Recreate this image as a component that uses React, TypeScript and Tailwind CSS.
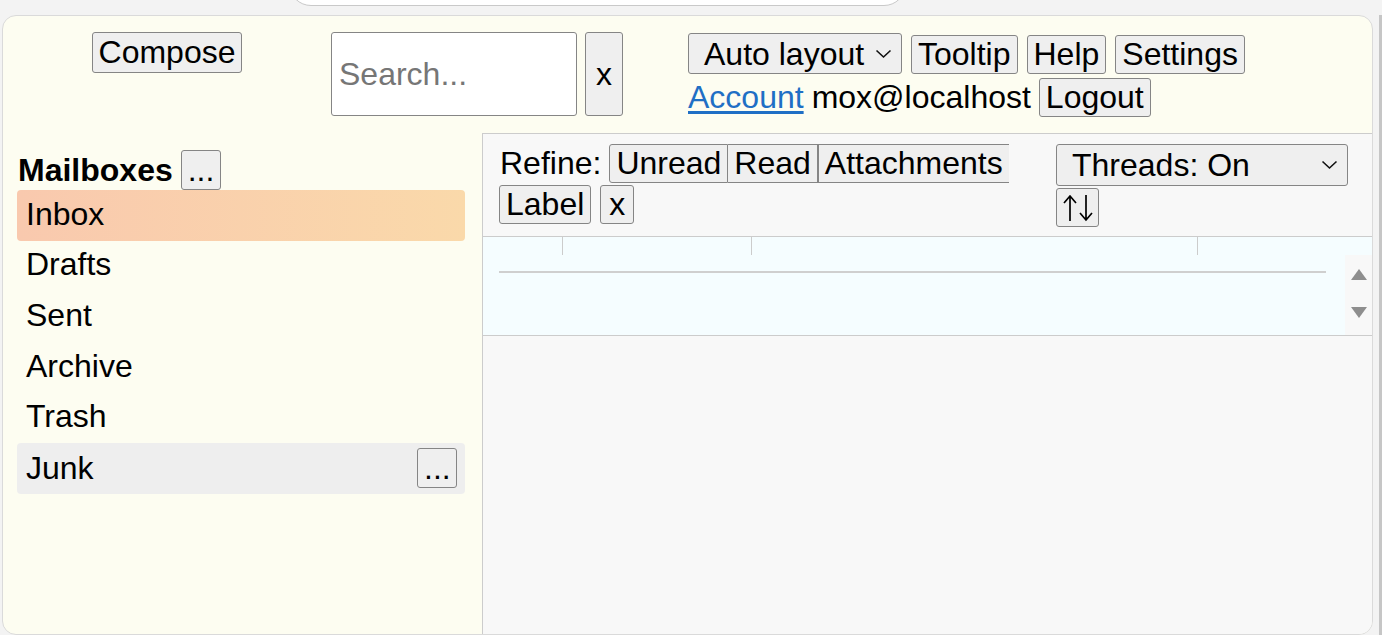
import React from 'react'

const btn = 'bg-[#efefef] border border-[#858585] rounded-[3px] px-[6px] leading-[37px] text-black'

function Chevron() {
  return (
    <svg width="17" height="10" viewBox="0 0 17 10" fill="none" stroke="#111" strokeWidth="1.6">
      <path d="M1.5 1.5 L8.5 8 L15.5 1.5" />
    </svg>
  )
}

function Select({ label, width }: { label: string; width: string }) {
  return (
    <div className={`${width} flex items-center justify-between bg-[#efefef] border border-[#858585] rounded-[3px] pl-[15px] pr-[9px]`}>
      <span className="leading-[36px]">{label}</span>
      <Chevron />
    </div>
  )
}

function SortArrows() {
  return (
    <svg width="32" height="30" viewBox="0 0 32 30" fill="none" stroke="#000" strokeWidth="1.7">
      <path d="M8 28 V3 M2 10 L8 3 L14 10" />
      <path d="M24 2 V27 M18 20 L24 27 L30 20" />
    </svg>
  )
}

const mailboxes = ['Inbox', 'Drafts', 'Sent', 'Archive', 'Trash', 'Junk']

export default function App() {
  return (
    <div className="w-[1382px] h-[635px] bg-[#f3f3f3] overflow-hidden flex flex-col font-['Liberation_Sans',Arial,sans-serif] text-[32px] leading-[1.15] text-black">
      {/* address bar edge */}
      <div className="h-[15px] shrink-0 overflow-hidden">
        <div className="ml-[289px] w-[617px] h-[30px] -mt-[24px] bg-white border border-[#c9c9c9] rounded-b-[22px]" />
      </div>

      <div className="flex flex-1">
        <div className="ml-[2px] w-[1371px] h-[620px] bg-[#fdfdf1] border border-[#dadada] rounded-[14px] overflow-hidden flex flex-col">
          {/* top bar */}
          <div className="h-[117px] shrink-0 flex items-start pt-[16px]">
            <div className="w-[328px] flex justify-center">
              <button className={`${btn} leading-[36px] py-px`}>Compose</button>
            </div>
            <div className="flex gap-[8px]">
              <input
                className="w-[246px] h-[84px] bg-white border border-[#858585] rounded-[3px] px-[7px] placeholder:text-[#767676] outline-none"
                placeholder="Search..."
              />
              <button className={`${btn} w-[38px] h-[84px] px-0`}>x</button>
            </div>
            <div className="ml-[65px] flex flex-col gap-[4px] pt-px">
              <div className="flex items-end gap-[9px]">
                <Select label="Auto layout" width="w-[214px] h-[41px]" />
                <button className={btn}>Tooltip</button>
                <button className={btn}>Help</button>
                <button className={`${btn} px-[5px]`}>Settings</button>
              </div>
              <div className="flex items-center gap-[8px]">
                <a href="#" className="text-[#1f6fc5] underline underline-offset-[3px]">Account</a>
                <span>mox@localhost</span>
                <button className={`${btn} leading-[36px]`}>Logout</button>
              </div>
            </div>
          </div>

          <div className="flex flex-1">
            {/* mailbox list */}
            <div className="w-[479px] shrink-0 pl-[14px] pr-[17px] pt-[17px]">
              <div className="flex items-center h-[40px]">
                <span className="font-bold ml-[1px]">Mailboxes</span>
                <button className={`${btn} ml-[8px] w-[40px] h-[40px] px-0 leading-[30px]`}>...</button>
              </div>
              {mailboxes.map((m) => (
                <div
                  key={m}
                  className={
                    m === 'Inbox'
                      ? 'h-[50.6px] flex items-center px-[9px] pb-[2px] rounded-[4px] bg-gradient-to-r from-[#f9c9ae] to-[#fad9aa]'
                      : m === 'Junk'
                        ? 'h-[50.6px] flex items-center justify-between pl-[9px] pr-[8px] rounded-[4px] bg-[#eeeeee]'
                        : 'h-[50.6px] flex items-center px-[9px] pb-[2px]'
                  }
                >
                  <span>{m}</span>
                  {m === 'Junk' && (
                    <button className={`${btn} w-[40px] h-[40px] px-0 leading-[30px]`}>...</button>
                  )}
                </div>
              ))}
            </div>

            {/* message pane */}
            <div className="flex-1 flex flex-col bg-[#f8f8f8] border-l border-t border-[#cccccc]">
              <div className="flex pt-[10px] pl-[16px] pb-[9px] border-b border-[#cccccc]">
                <div className="w-[557px] flex flex-col gap-[2px]">
                  <div className="flex items-center">
                    <span className="ml-px">Refine:</span>
                    <div className="ml-[8px] flex">
                      <button className={`${btn} rounded-r-none`}>Unread</button>
                      <button className={`${btn} px-[5px] rounded-none border-l-0`}>Read</button>
                      <button className={`${btn} px-[4px] rounded-none border-l border-r-0`}>Attachments</button>
                    </div>
                  </div>
                  <div className="flex items-center gap-[9px]">
                    <button className={btn}>Label</button>
                    <button className={`${btn} px-[8px]`}>x</button>
                  </div>
                </div>
                <div className="flex flex-col items-start gap-[2px]">
                  <Select label="Threads: On" width="w-[292px] h-[42px]" />
                  <button className="w-[43px] h-[39px] flex items-center justify-center bg-[#efefef] border border-[#858585] rounded-[3px]">
                    <SortArrows />
                  </button>
                </div>
              </div>

              {/* message list */}
              <div className="h-[99px] bg-[#f5fdff] border-b border-[#cccccc] flex flex-col">
                <div className="h-[18px] flex shrink-0">
                  <div className="w-[80px] border-r border-[#cccccc]" />
                  <div className="w-[189px] border-r border-[#cccccc]" />
                  <div className="w-[446px] border-r border-[#cccccc]" />
                </div>
                <div className="flex flex-1">
                  <div className="flex-1 pl-[16px] pt-[16px] pr-[19px]">
                    <div className="h-[2px] bg-[#cfcfcf]" />
                  </div>
                  <div className="w-[27px] bg-[#f8f8f8] flex flex-col items-center pt-[13px] gap-[25px]">
                    <svg width="18" height="13" viewBox="0 0 18 13"><path d="M9 1 L17 12 L1 12 Z" fill="#8e8e8e" /></svg>
                    <svg width="18" height="13" viewBox="0 0 18 13"><path d="M1 1 L17 1 L9 12 Z" fill="#8e8e8e" /></svg>
                  </div>
                </div>
              </div>
            </div>
          </div>
        </div>
        <div className="ml-[6px] w-[3px] bg-[#c6c6c6]" />
      </div>
    </div>
  )
}
